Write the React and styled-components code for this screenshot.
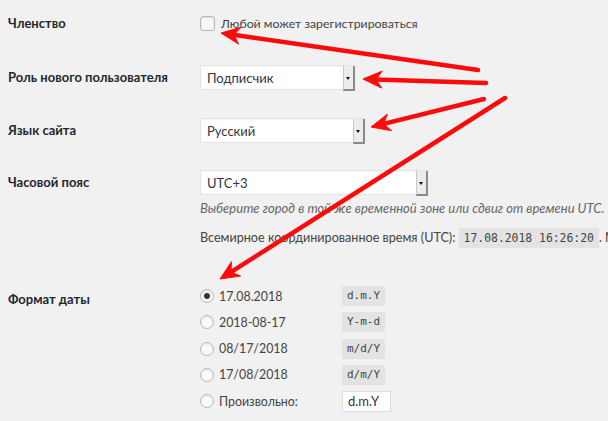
import React from 'react'
import styled, { createGlobalStyle } from 'styled-components';

const GlobalStyle = createGlobalStyle`
  html, body {
    margin: 0;
    padding: 0;
    background: #f1f1f1;
  }
  body {
    font-family: Lato, "Open Sans", sans-serif;
    font-size: 13px;
    color: #444;
  }
`;

const dateFormats = [
  { label: '17.08.2018', code: 'd.m.Y', checked: true },
  { label: '2018-08-17', code: 'Y-m-d' },
  { label: '08/17/2018', code: 'm/d/Y' },
  { label: '17/08/2018', code: 'd/m/Y' },
];

// red pointer arrows drawn over the settings
const arrows = [
  { from: [478, 70], to: [221, 33] },
  { from: [486, 83], to: [363, 79] },
  { from: [484, 99], to: [371, 127] },
  { from: [505, 98], to: [220, 279] },
];

function arrowHead(from, to) {
  const dx = to[0] - from[0];
  const dy = to[1] - from[1];
  const len = Math.hypot(dx, dy);
  const ux = dx / len;
  const uy = dy / len;
  const px = -uy;
  const py = ux;
  const back = 19;
  const half = 8.5;
  const notch = 13;
  const bx = to[0] - ux * back;
  const by = to[1] - uy * back;
  const nx = to[0] - ux * notch;
  const ny = to[1] - uy * notch;
  return [
    [to[0], to[1]],
    [bx + px * half, by + py * half],
    [nx, ny],
    [bx - px * half, by - py * half],
  ].map(p => p.join(',')).join(' ');
}

function Select({ value, width }) {
  return (
    <SelectBox $width={width}>
      <span>{value}</span>
      <SelectArrow />
    </SelectBox>
  );
}

function Settings() {
  return (
    <Page>
      <GlobalStyle />
      <Row $top={12}>
        <Label $lh={22}>Членство</Label>
        <Field>
          <CheckLine>
            <Checkbox />
            <span>Любой может зарегистрироваться</span>
          </CheckLine>
        </Field>
      </Row>

      <Row $top={31}>
        <Label $lh={25}>Роль нового пользователя</Label>
        <Field>
          <Select value="Подписчик" width={155} />
        </Field>
      </Row>

      <Row $top={28}>
        <Label $lh={25}>Язык сайта</Label>
        <Field>
          <Select value="Русский" width={165} />
        </Field>
      </Row>

      <Row $top={27}>
        <Label $lh={25}>Часовой пояс</Label>
        <Field>
          <Select value="UTC+3" width={228} />
          <Description>
            Выберите город в той же временной зоне или сдвиг от времени UTC.
          </Description>
          <UtcLine>
            Всемирное координированное время (UTC): <Code $wide>17.08.2018 16:26:20</Code>. Местное время
          </UtcLine>
        </Field>
      </Row>

      <Row $top={35}>
        <Label $lh={32}>Формат даты</Label>
        <Field>
          {dateFormats.map(f => (
            <RadioRow key={f.code}>
              <Radio $checked={f.checked} />
              <RadioText>{f.label}</RadioText>
              <Code>{f.code}</Code>
            </RadioRow>
          ))}
          <RadioRow>
            <Radio />
            <RadioText>Произвольно:</RadioText>
            <CustomInput>d.m.Y</CustomInput>
          </RadioRow>
        </Field>
      </Row>

      <Overlay width="608" height="421" viewBox="0 0 608 421">
        {arrows.map((a, i) => {
          const dx = a.to[0] - a.from[0];
          const dy = a.to[1] - a.from[1];
          const len = Math.hypot(dx, dy);
          const ex = a.to[0] - (dx / len) * 12;
          const ey = a.to[1] - (dy / len) * 12;
          return (
            <g key={i} fill="#fb0b0b" stroke="#fb0b0b">
              <line x1={a.from[0]} y1={a.from[1]} x2={ex} y2={ey} strokeWidth="4.5" strokeLinecap="round" />
              <polygon points={arrowHead(a.from, a.to)} strokeWidth="1" strokeLinejoin="round" />
            </g>
          );
        })}
      </Overlay>
    </Page>
  );
}

export default function App() {
  return <Settings />;
}

const Page = styled.div`
  position: relative;
  width: 608px;
  height: 421px;
  overflow: hidden;
  background: #f1f1f1;
`;

const Row = styled.div`
  display: grid;
  grid-template-columns: 200px 1fr;
  margin-top: ${props => props.$top}px;
`;

const Label = styled.div`
  padding-left: 8px;
  font-weight: 700;
  font-size: 13px;
  color: #23282d;
  line-height: ${props => props.$lh}px;
  white-space: nowrap;
`;

const Field = styled.div`
  display: flex;
  flex-direction: column;
  align-items: flex-start;
  min-width: 0;
`;

const CheckLine = styled.label`
  display: flex;
  align-items: center;
  gap: 6px;
  height: 22px;
  font-size: 12.3px;
  color: #444;
`;

const Checkbox = styled.span`
  width: 13px;
  height: 13px;
  border: 1px solid #b4b9be;
  border-radius: 3px;
  background: #f7f7f7;
  box-shadow: inset 0 1px 2px rgba(0, 0, 0, 0.1);
`;

const SelectBox = styled.div`
  position: relative;
  box-sizing: border-box;
  width: ${props => props.$width}px;
  height: 25px;
  display: flex;
  align-items: center;
  padding-left: 6px;
  background: #fff;
  border: 1px solid #e4e4e4;
  box-shadow: inset 0 1px 2px rgba(0, 0, 0, 0.05);
  color: #32373c;
`;

const SelectArrow = styled.span`
  position: absolute;
  right: -1px;
  top: 0;
  bottom: -2px;
  width: 9px;
  background: #ececec;
  border-left: 1px solid #c8c8c8;
  border-right: 2px solid #8a8a8a;
  border-bottom: 2px solid #8a8a8a;

  &::after {
    content: '';
    position: absolute;
    left: 2px;
    top: 11px;
    border-left: 2.5px solid transparent;
    border-right: 2.5px solid transparent;
    border-top: 3px solid #111;
  }
`;

const Description = styled.p`
  margin: 4px 0 0;
  font-style: italic;
  color: #666;
  line-height: 18px;
  white-space: nowrap;
`;

const UtcLine = styled.p`
  margin: 11px 0 0;
  font-size: 12.6px;
  line-height: 19px;
  white-space: nowrap;
  color: #444;
`;

const Code = styled.code`
  display: inline-block;
  font-family: "DejaVu Sans Mono", "Liberation Mono", monospace;
  font-size: ${props => (props.$wide ? '11.4px' : '11px')};
  line-height: 18px;
  padding: 1px 5px;
  background: #e3e3e3;
  color: #444;
`;

const RadioRow = styled.div`
  display: grid;
  grid-template-columns: 19px 123px auto;
  align-items: center;
  height: 26.25px;
`;

const Radio = styled.span`
  position: relative;
  box-sizing: border-box;
  width: 14px;
  height: 14px;
  border: 1px solid #b4b9be;
  border-radius: 50%;
  background: #fafafa;
  box-shadow: inset 0 1px 2px rgba(0, 0, 0, 0.1);

  &::after {
    content: '';
    display: ${props => (props.$checked ? 'block' : 'none')};
    position: absolute;
    left: 3px;
    top: 3px;
    width: 6px;
    height: 6px;
    border-radius: 50%;
    background: #333;
  }
`;

const RadioText = styled.span`
  font-size: 12.4px;
  color: #444;
`;

const CustomInput = styled.span`
  box-sizing: border-box;
  width: 49px;
  height: 21px;
  line-height: 19px;
  padding-left: 5px;
  background: #fff;
  border: 1px solid #ddd;
  color: #32373c;
`;

const Overlay = styled.svg`
  position: absolute;
  left: 0;
  top: 0;
  pointer-events: none;
`;
